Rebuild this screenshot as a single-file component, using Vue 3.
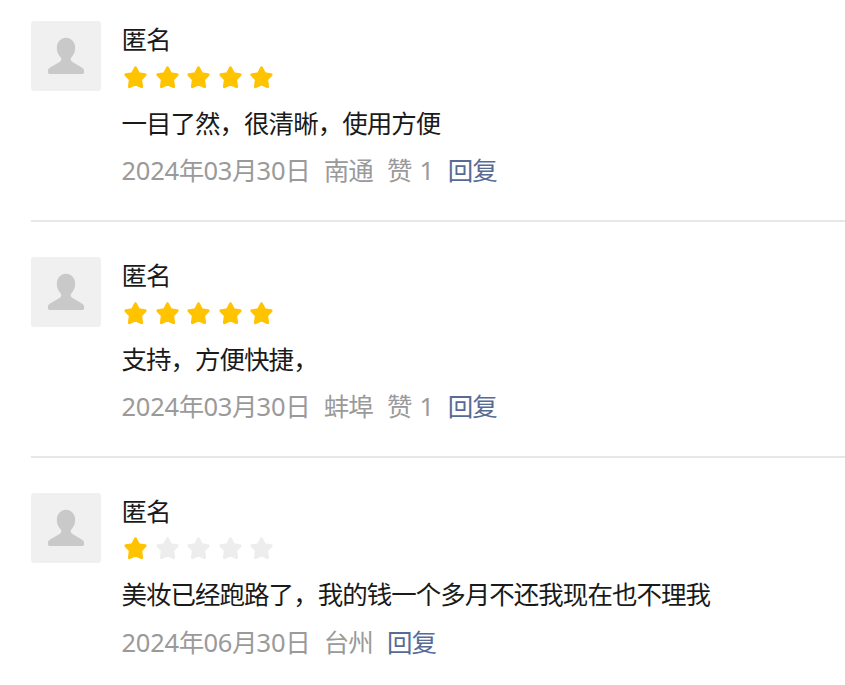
<script setup>
const reviews = [
  { name: '匿名', score: 5, text: '一目了然，很清晰，使用方便', date: '2024年03月30日', city: '南通', likes: 1 },
  { name: '匿名', score: 5, text: '支持，方便快捷，', date: '2024年03月30日', city: '蚌埠', likes: 1 },
  { name: '匿名', score: 1, text: '美妆已经跑路了，我的钱一个多月不还我现在也不理我', date: '2024年06月30日', city: '台州', likes: 0 },
]

// Digits are set in a Latin face, so the date is split into number and unit runs
const runs = (date) => date.match(/\d+|\D+/g).map((text) => ({ text, num: /\d/.test(text) }))
</script>

<template>
  <main class="reviews">
    <article v-for="(r, i) in reviews" :key="i" class="review">
      <div class="avatar">
        <svg viewBox="0 0 70 70" width="70" height="70">
          <path d="M35 16.8c5.3 0 9.2 4.3 9.2 10.2 0 4.300-1.800 7.400-4.200 9.800-.8 2.300 0 3.500 2.300 4.800l8.200 4.700c2 1.200 2.600 2.200 2.600 3.700v1.300c0 1.100-.6 1.600-1.700 1.600H18.600c-1.100 0-1.700-.5-1.700-1.600v-1.300c0-1.500.6-2.500 2.600-3.700l8.200-4.700c2.300-1.300 3.100-2.500 2.300-4.800-2.400-2.400-4.200-5.500-4.200-9.800 0-5.900 3.900-10.200 9.200-10.200z" />
        </svg>
      </div>
      <div class="body">
        <div class="name">{{ r.name }}</div>
        <div class="stars">
          <svg v-for="n in 5" :key="n" class="star" :class="{ on: n <= r.score }" viewBox="0 0 27 27">
            <path d="M13.500 3.900 16.500 9.800 23.100 10.700 18.600 15.500 19.600 22.600 13.500 19.800 7.400 22.600 8.400 15.500 3.900 10.700 10.500 9.800Z" />
          </svg>
        </div>
        <div class="text">{{ r.text }}</div>
        <div class="meta">
          <span class="date"><span v-for="(p, k) in runs(r.date)" :key="k" :class="{ num: p.num }">{{ p.text }}</span></span>
          <span class="city">{{ r.city }}</span>
          <span v-if="r.likes" class="likes">赞<span class="num count">{{ r.likes }}</span></span>
          <a class="reply">回复</a>
        </div>
      </div>
    </article>
  </main>
</template>

<style>
body {
  background: #fff;
}
</style>

<style scoped>
.reviews {
  box-sizing: border-box;
  height: 685px;
  padding: 21px 0 0 31px;
  overflow: hidden;
  font-family: "Noto Sans CJK SC", sans-serif;
  font-size: 25.5px;
  letter-spacing: -0.98px;
  color: #1a1a1a;
}
.review {
  box-sizing: border-box;
  display: flex;
  gap: 20.5px;
  height: 201px;
  margin-bottom: 35px;
  border-bottom: 2px solid #e7e7e7;
}
.review:last-child {
  border-bottom: 0;
}
.avatar {
  flex: none;
  width: 70px;
  height: 70px;
  border-radius: 3px;
  background: #f0f0f0;
  overflow: hidden;
}
.avatar svg {
  display: block;
  fill: #c9c9c9;
}
.body {
  flex: 1;
  min-width: 0;
}
.name {
  height: 38px;
  line-height: 34px;
}
.stars {
  display: flex;
  gap: 4.6px;
  height: 36px;
  padding: 5px 0 0 0.5px;
  box-sizing: border-box;
}
.review:last-child .stars {
  padding-top: 4px;
}
.star {
  width: 27px;
  height: 27px;
  fill: #ededed;
  stroke: #ededed;
  stroke-width: 3;
  stroke-linejoin: round;
}
.star.on {
  fill: #ffc300;
  stroke: #ffc300;
}
.text {
  height: 52px;
  line-height: 54px;
  white-space: nowrap;
}
.review:last-child .text {
  line-height: 52px;
}
.meta {
  display: flex;
  align-items: baseline;
  height: 44px;
  line-height: 44px;
  color: #9a9a9a;
  white-space: nowrap;
}
.num {
  font-family: "Noto Sans", "Open Sans", sans-serif;
  font-size: 25.5px;
  line-height: 1;
  letter-spacing: -0.25px;
}
.date,
.city,
.likes {
  margin-right: 14px;
}
.count {
  margin-left: 8px;
}
.reply {
  color: #576b95;
}
</style>
